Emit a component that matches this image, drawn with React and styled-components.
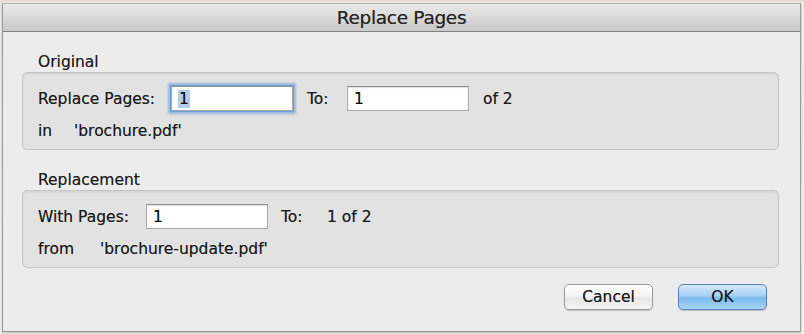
import styled, { createGlobalStyle } from 'styled-components';

const GlobalStyle = createGlobalStyle`
    html, body {
        margin: 0;
        padding: 0;
        background: #f2f2f2;
    }
    body {
        font-family: "DejaVu Sans", "Liberation Sans", sans-serif;
    }
`;

const Page = styled.div`
    padding: 3px 3px 2px 2px;
    background: linear-gradient(to bottom, #e9d6d2 0, #ececec 3px, #f2f2f2 100%);
`;

const Window = styled.div`
    width: 799px;
    box-sizing: border-box;
    border: 1px solid #9a9a9a;
    border-top-color: #b5b5b5;
    background: #ececec;
    box-shadow: 0 1px 2px rgba(0, 0, 0, 0.25);
`;

const TitleBar = styled.div`
    height: 27px;
    display: flex;
    align-items: center;
    justify-content: center;
    background: linear-gradient(to bottom, #e9e9e9 0%, #d9d9d9 50%, #c9c9c9 100%);
    border-bottom: 1px solid #7f7f7f;
    font-size: 18.5px;
    color: #262626;
    letter-spacing: -0.3px;
    text-shadow: 0 0 0.6px rgba(0, 0, 0, 0.6);
`;

const Content = styled.div`
    padding: 21px 21px 21px 19px;
`;

const GroupLabel = styled.div`
    font-size: 15.5px;
    line-height: 19px;
    color: #1c1c1c;
    padding-left: 16px;
    margin-top: ${p => p.$top || 0}px;
    text-shadow: 0 0 0.5px rgba(0, 0, 0, 0.5);
`;

const GroupBox = styled.div`
    border: 1px solid #c6c6c6;
    border-radius: 5px;
    background: #e2e2e2;
    box-shadow: inset 0 1px 2px rgba(0, 0, 0, 0.08);
    padding: 13px 16px 9px 15px;
    display: flex;
    flex-direction: column;
    gap: 11px;
`;

const Row = styled.div`
    display: flex;
    align-items: center;
    height: ${p => p.$h}px;
    font-size: 15.5px;
    color: #1a1a1a;
    text-shadow: 0 0 0.5px rgba(0, 0, 0, 0.5);
`;

const Text = styled.span`
    width: ${p => (p.$w ? `${p.$w}px` : 'auto')};
    margin-left: ${p => p.$ml || 0}px;
    white-space: nowrap;
    flex-shrink: 0;
`;

const Field = styled.div`
    width: 122px;
    height: 25px;
    box-sizing: border-box;
    border: 1px solid #a8a8a8;
    border-top-color: #8f8f8f;
    background: #fff;
    display: flex;
    align-items: center;
    padding-left: 6px;
    font-size: 15.5px;
    color: #111;
    flex-shrink: 0;
    box-shadow: ${p => (p.$focus
        ? '0 0 0 1px #6e9fd6, 0 0 2px 3px rgba(94, 146, 214, 0.55)'
        : 'inset 0 1px 1px rgba(0, 0, 0, 0.12)')};
`;

const Selected = styled.span`
    background: #b4cdea;
    padding: 0 1px;
`;

const Buttons = styled.div`
    display: flex;
    justify-content: flex-end;
    gap: 25px;
    margin-top: 16px;
    padding-right: 12px;
`;

const Button = styled.div`
    width: 89px;
    height: 26px;
    box-sizing: border-box;
    border-radius: 5px;
    display: flex;
    align-items: center;
    justify-content: center;
    font-size: 15.5px;
    color: #1c1c1c;
    text-shadow: 0 0 0.6px rgba(0, 0, 0, 0.6);
    border: 1px solid ${p => (p.$primary ? '#5b86b4' : '#9b9b9b')};
    background: ${p => (p.$primary
        ? 'linear-gradient(to bottom, #d3e8fb 0%, #a6d0f4 45%, #7cb9ee 55%, #a9d6fa 100%)'
        : 'linear-gradient(to bottom, #ffffff 0%, #f4f4f4 45%, #e6e6e6 55%, #f5f5f5 100%)')};
    box-shadow: 0 1px 1px rgba(0, 0, 0, 0.2);
`;

export default function App() {
    return (
        <>
            <GlobalStyle />
            <Page>
                <Window>
                    <TitleBar>Replace Pages</TitleBar>
                    <Content>
                        <GroupLabel>Original</GroupLabel>
                        <GroupBox>
                            <Row $h={25}>
                                <Text $w={133}>Replace Pages:</Text>
                                <Field $focus><Selected>1</Selected></Field>
                                <Text $w={40} $ml={14}>To:</Text>
                                <Field>1</Field>
                                <Text $ml={14}>of 2</Text>
                            </Row>
                            <Row $h={18}>
                                <Text $w={36}>in</Text>
                                <Text>'brochure.pdf'</Text>
                            </Row>
                        </GroupBox>

                        <GroupLabel $top={21}>Replacement</GroupLabel>
                        <GroupBox>
                            <Row $h={25}>
                                <Text $w={108}>With Pages:</Text>
                                <Field>1</Field>
                                <Text $w={46} $ml={13}>To:</Text>
                                <Text>1 of 2</Text>
                            </Row>
                            <Row $h={18}>
                                <Text $w={62}>from</Text>
                                <Text>'brochure-update.pdf'</Text>
                            </Row>
                        </GroupBox>

                        <Buttons>
                            <Button>Cancel</Button>
                            <Button $primary>OK</Button>
                        </Buttons>
                    </Content>
                </Window>
            </Page>
        </>
    );
}
